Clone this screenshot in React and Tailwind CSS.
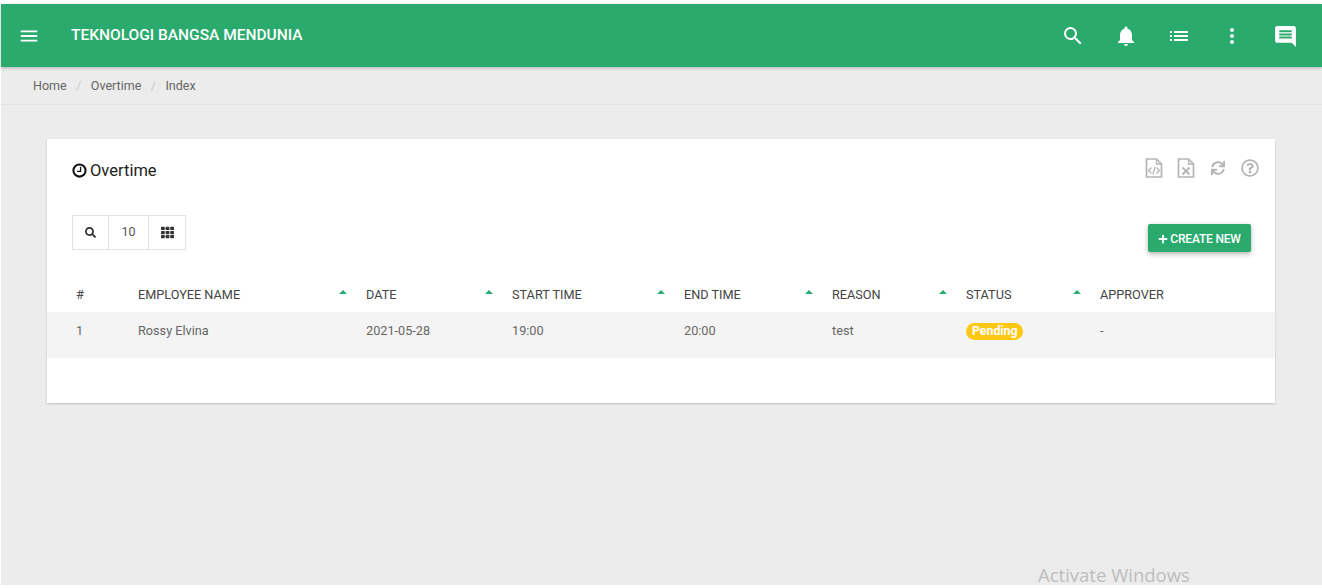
import React from "react";
import { MdMenu, MdSearch, MdNotifications, MdList, MdMoreVert, MdMessage } from "react-icons/md";
import { FaSearch, FaTh, FaSync, FaRegQuestionCircle, FaPlus } from "react-icons/fa";

const columns = [
  { label: "#", cls: "w-[86px] pl-[29px]", sort: false },
  { label: "EMPLOYEE NAME", cls: "w-[233px] pl-[5px] pr-[19px]", sort: true },
  { label: "DATE", cls: "w-[146px] pr-[19px]", sort: true },
  { label: "START TIME", cls: "w-[172px] pr-[19px]", sort: true },
  { label: "END TIME", cls: "w-[148px] pr-[19px]", sort: true },
  { label: "REASON", cls: "w-[134px] pr-[19px]", sort: true },
  { label: "STATUS", cls: "w-[134px] pr-[19px]", sort: true },
  { label: "APPROVER", cls: "", sort: false },
];

const cells = ["pl-[29px]", "pl-[5px]", "", "", "", "", "", ""];

function Caret() {
  return <span className="mb-[5px] h-0 w-0 border-x-[4px] border-b-[4px] border-x-transparent border-b-[#27ae6e]" />;
}

function FileIcon({ children }) {
  return (
    <svg width="18" height="20" viewBox="0 0 18 20" fill="none" stroke="#b5b5b5" strokeWidth="1.7">
      <path d="M1.5 1h10l5 5v13h-15z" />
      <path d="M11.5 1v5h5" strokeWidth="1.3" />
      {children}
    </svg>
  );
}

function ClockIcon() {
  return (
    <svg className="mb-[1px]" width="15" height="15" viewBox="0 0 14 14" fill="none" stroke="#111" strokeWidth="1.9">
      <circle cx="7" cy="7" r="5.7" />
      <path d="M8 3.6v4.2H4.8" strokeWidth="1.2" />
    </svg>
  );
}

export default function App() {
  return (
    <div className="h-[588px] w-[1322px] overflow-hidden bg-white pb-[3px] pl-[1px] pt-[4px] font-['Roboto',sans-serif]">
      <div className="relative flex h-full flex-col bg-[#ececec]">
        <header className="flex h-[63px] shrink-0 items-center bg-[#2aaa6d] pl-[17px] pr-[24px] text-white shadow-[0_1px_3px_rgba(0,0,0,0.25)]">
          <MdMenu className="text-[22px]" />
          <span className="ml-[31px] text-[15.5px] font-medium">TEKNOLOGI BANGSA MENDUNIA</span>
          <div className="ml-auto flex items-center">
            <MdSearch className="text-[24px]" />
            <MdNotifications className="ml-[29.25px] text-[24px]" />
            <MdList className="ml-[29.25px] text-[24px]" />
            <MdMoreVert className="ml-[29.25px] text-[24px]" />
            <MdMessage className="ml-[28.75px] mt-[1px] -scale-x-100 text-[25px]" />
          </div>
        </header>

        <nav className="flex h-[38px] shrink-0 items-center border-b border-[#e4e4e4] pl-[32px] pt-[2px] text-[12.5px] text-[#666]">
          <span>Home</span>
          <span className="mx-[9.5px] text-[#ccc]">/</span>
          <span>Overtime</span>
          <span className="mx-[9.5px] text-[#ccc]">/</span>
          <span>Index</span>
        </nav>

        <main className="ml-[46px] mr-[47px] mt-[34px] h-[264px] bg-white shadow-[0_1px_2px_rgba(0,0,0,0.2)]">
          <div className="flex items-start justify-between pl-[25px] pr-[9px] pt-[21px]">
            <h1 className="flex items-center gap-[3px] text-[16.5px] leading-[22px] text-[#222]">
              <ClockIcon /> Overtime
            </h1>
            <div className="-mt-[2px] flex items-center text-[#b5b5b5]">
              <span className="flex w-[32px] justify-center">
                <FileIcon>
                  <path d="M6.5 9.5l-3 3 3 3M11.5 9.5l3 3-3 3M10.2 9l-2.4 7.5" strokeWidth="1.3" />
                </FileIcon>
              </span>
              <span className="flex w-[32px] justify-center">
                <FileIcon>
                  <path d="M5.5 9.5l7 7M12.5 9.5l-7 7" strokeWidth="1.9" />
                </FileIcon>
              </span>
              <span className="flex w-[32px] justify-center"><FaSync className="text-[14px]" /></span>
              <span className="flex w-[32px] justify-center"><FaRegQuestionCircle className="text-[18px]" /></span>
            </div>
          </div>

          <div className="mt-[33px] flex items-start justify-between pl-[25px] pr-[24px]">
            <div className="flex h-[35px] text-[12.5px] text-[#555]">
              <span className="flex w-[37px] items-center justify-center border border-[#e2e2e2]"><FaSearch className="text-[11px] text-[#333]" /></span>
              <span className="ml-[-1px] flex w-[41px] items-center justify-center border border-[#e2e2e2]">10</span>
              <span className="ml-[-1px] flex w-[38px] items-center justify-center border border-[#e2e2e2]"><FaTh className="text-[13px] text-[#333]" /></span>
            </div>
            <button className="mt-[9px] flex h-[28px] w-[103px] items-center justify-center gap-[2px] rounded-[2px] bg-[#2aaa6d] pt-[1px] text-[12px] font-medium tracking-[-0.2px] text-white shadow-[0_2px_5px_rgba(0,0,0,0.3)]">
              <FaPlus className="text-[10px]" /> CREATE NEW
            </button>
          </div>

          <table className="mt-[23px] w-full table-fixed border-collapse text-left text-[12.7px]">
            <thead>
              <tr className="h-[37px]">
                {columns.map((c) => (
                  <th key={c.label} className={`${c.cls} pt-[2px] font-normal text-[#444]`}>
                    <div className="flex items-center justify-between">
                      <span>{c.label}</span>
                      {c.sort && <Caret />}
                    </div>
                  </th>
                ))}
              </tr>
            </thead>
            <tbody>
              <tr className="h-[46px] bg-[#f4f4f4] text-[#666]">
                {["1", "Rossy Elvina", "2021-05-28", "19:00", "20:00", "test", null, "-"].map((v, i) => (
                  <td key={i} className={`${cells[i]} pb-[9px]`}>
                    {v === null ? (
                      <span className="inline-block rounded-full bg-[#ffc815] px-[6px] text-[12.3px] font-bold leading-[17px] text-white">Pending</span>
                    ) : v}
                  </td>
                ))}
              </tr>
            </tbody>
          </table>
        </main>

        <span className="absolute bottom-[-2px] left-[1037px] font-['Open_Sans',sans-serif] text-[18.5px] leading-[24px] text-[#bdbdbd]">Activate Windows</span>
      </div>
    </div>
  );
}
